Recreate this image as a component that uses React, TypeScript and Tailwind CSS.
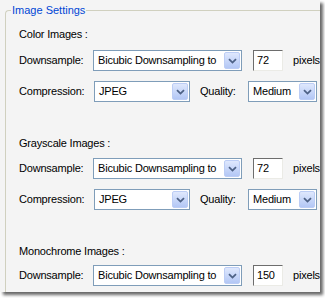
import { ReactNode } from 'react';

const font = { fontFamily: '"Liberation Sans", Arial, sans-serif' };

function Chevron() {
  return (
    <svg width="9" height="6" viewBox="0 0 9 6">
      <path d="M1 1.2 L4.5 4.6 L8 1.2" fill="none" stroke="#4d6185" strokeWidth="1.8" />
    </svg>
  );
}

function Dropdown({ width, value }: { width: string; value: string }) {
  return (
    <div className={`${width} h-[21px] flex items-center border border-[#7f9db9] bg-white p-[1px]`}>
      <span className="flex-1 pl-[3px] text-black whitespace-nowrap">{value}</span>
      <div className="w-[16px] h-full flex items-center justify-center rounded-[2px] border border-[#bccdf5] bg-gradient-to-b from-[#dfe8fd] to-[#b3c7f5]">
        <Chevron />
      </div>
    </div>
  );
}

function NumberBox({ value }: { value: string }) {
  return (
    <div className="w-[30px] h-[21px] flex items-center border-t border-l border-t-[#6d6d6d] border-l-[#6d6d6d] border-b border-r border-b-[#ebebe6] border-r-[#ebebe6] bg-white pl-[3px] text-black">
      {value}
    </div>
  );
}

function Row({ label, children }: { label: string; children: ReactNode }) {
  return (
    <div className="h-[21px] flex items-center whitespace-nowrap">
      <span className="w-[74px] shrink-0">{label}</span>
      {children}
    </div>
  );
}

function DownsampleRow({ dpi }: { dpi: string }) {
  return (
    <Row label="Downsample:">
      <Dropdown width="w-[149px]" value="Bicubic Downsampling to" />
      <div className="ml-[11px]">
        <NumberBox value={dpi} />
      </div>
      <span className="ml-[10px]">pixels,</span>
    </Row>
  );
}

function CompressionRow() {
  return (
    <Row label="Compression:">
      <div className="ml-[1px]">
        <Dropdown width="w-[96px]" value="JPEG" />
      </div>
      <span className="ml-[10px] w-[48px]">Quality:</span>
      <Dropdown width="w-[69px]" value="Medium" />
    </Row>
  );
}

function Header({ title }: { title: string }) {
  return <div className="h-[14px] leading-[14px]">{title}</div>;
}

export default function App() {
  return (
    <div className="w-[325px] h-[298px] bg-white" style={font}>
      <div className="w-[320px] h-[292px] bg-[#f4f4f4] overflow-hidden shadow-[3px_3px_3px_rgba(0,0,0,0.6)] pt-[4px] text-[11px] tracking-[-0.2px] text-black">
        <fieldset className="ml-[5px] w-[330px] h-[300px] border-t border-l border-[#d0d0bf] rounded-tl-[4px] pl-[13px]">
          <legend className="-ml-[8px] px-[1px] leading-[13px] text-[#0046d5] tracking-normal">Image Settings</legend>
          <div className="mt-[10px]">
            <Header title="Color Images :" />
            <div className="mt-[9px] flex flex-col gap-[10px]">
              <DownsampleRow dpi="72" />
              <CompressionRow />
            </div>
          </div>
          <div className="mt-[34px]">
            <Header title="Grayscale Images :" />
            <div className="mt-[8px] flex flex-col gap-[10px]">
              <DownsampleRow dpi="72" />
              <CompressionRow />
            </div>
          </div>
          <div className="mt-[34px]">
            <Header title="Monochrome Images :" />
            <div className="mt-[7px] flex flex-col gap-[10px]">
              <DownsampleRow dpi="150" />
            </div>
          </div>
        </fieldset>
      </div>
    </div>
  );
}
